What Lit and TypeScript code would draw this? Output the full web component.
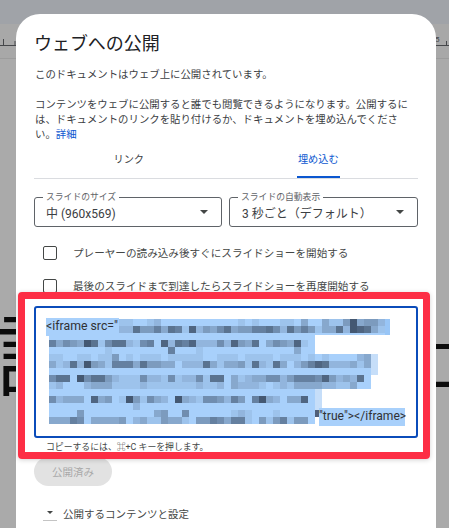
import { LitElement, html, css, svg } from "lit";
import { customElement } from "lit/decorators.js";

const z = (n: number) => "0".repeat(n);
const ROWS: { h: number; s: string }[] = [
  { h: 7, s: z(10) + "110012" + z(9) + "00" + "101000110" + "300311493442" + "e" },
  { h: 7, s: z(10) + "227446376182435" + "73446675274641337298731" + "e" },
  { h: 2, s: z(48) + "e" },
  { h: 5, s: z(38) },
  { h: 7, s: "6354397157721560827682225" + "2843703543810" },
  { h: 7, s: z(8) + "1" + z(8) + "6" + "000" + "1" + z(13) + "3" + "00" },
  { h: 7, s: "1100110114010111011111001110111101110101000023" + "l" },
  { h: 7, s: "31272943166637443302227313" + "34172173024687222313" + "l" },
  { h: 7, s: z(46) + "l" },
  { h: 7, s: "5770957742111522151225177" + "031233552466658423270" },
  { h: 7, s: "12000233311112111111121120" + "322210121333322113" + "00" },
  { h: 7, s: z(38) + "l" },
  { h: 7, s: "52333083401941532093215542" + "64069320338" + "0" + "l" },
  { h: 7, s: z(12) + "2" + z(25) + "l" },
  { h: 7, s: "0000400000000003400500000" + "0121000100" + z(3) + "k" },
  { h: 7, s: "3336503333402311433104465366104146144" + "0" },
];

const BASE = [168, 208, 251];
const DARK = [68, 88, 114];
function shade(ch: string): string {
  if (ch === "l") return "#c6def9";
  if (ch === "e") return "#98c5f6";
  if (ch === "k") return "#4f5f78";
  const t = Number(ch) / 9;
  const c = BASE.map((b, i) => Math.round(b + (DARK[i] - b) * t));
  return `rgb(${c[0]},${c[1]},${c[2]})`;
}

@customElement("app-root")
export class AppRoot extends LitElement {
  static styles = css`
    :host {
      display: block;
      font-family: Roboto, "Noto Sans CJK JP", sans-serif;
      color: #3c4043;
    }
    .stage {
      position: relative;
      width: 449px;
      height: 528px;
      overflow: hidden;
      background: #aaaaaa;
    }
    .band-top { height: 24px; background: #a0a3a8; }
    .band-ruler {
      height: 35px;
      background: #a8a8a8;
      border-bottom: 1px solid #9c9c9c;
      box-sizing: border-box;
    }
    .band-ruler svg { display: block; }
    .glyph {
      position: absolute;
      font-family: "Noto Sans CJK JP", sans-serif;
      color: #0c0c0c;
      line-height: 1;
    }
    .g-left { left: -4px; top: 306px; font-size: 88px; }
    .g-right { left: 410px; top: 330px; font-size: 62px; }
    .modal {
      position: absolute;
      left: 16px;
      top: 14px;
      width: 420px;
      height: 560px;
      box-sizing: border-box;
      background: #fff;
      border-radius: 24px;
      padding: 18px 18px 0;
    }
    h1 {
      margin: 0;
      font-size: 18px;
      line-height: 24px;
      font-weight: 400;
      color: #202124;
      letter-spacing: -0.05px;
    }
    .para {
      margin: 11px 0 0 1px;
      font-size: 10.4px;
      line-height: 15px;
      white-space: nowrap;
    }
    a { color: #0b57d0; text-decoration: none; }
    .tabs {
      display: grid;
      grid-template-columns: 1fr 1fr;
      height: 31px;
      border-bottom: 1px solid #dadce0;
      margin-top: 5px;
      padding-right: 5px;
    }
    .tab {
      display: flex;
      justify-content: center;
      align-items: flex-start;
      padding-top: 5px;
      font-size: 10.2px;
      line-height: 15px;
    }
    .tab span { display: block; height: 26px; box-sizing: border-box; }
    .tab.on { color: #0b57d0; }
    .tab.on span { border-bottom: 2px solid #0b57d0; padding: 0 1px; }
    .selects {
      display: grid;
      grid-template-columns: 188px 189px;
      gap: 7px;
      margin-top: 18px;
    }
    .select {
      position: relative;
      height: 30px;
      box-sizing: border-box;
      border: 1px solid #5f6368;
      border-radius: 3px;
      display: flex;
      align-items: center;
      justify-content: space-between;
      padding: 0 13px 0 11px;
      font-size: 12px;
      color: #3c4043;
    }
    .select.two { padding-left: 12px; }
    .select label {
      position: absolute;
      left: 8px;
      top: -6px;
      padding: 0 3px;
      background: #fff;
      font-size: 8.8px;
      line-height: 11px;
      color: #5f6368;
    }
    .select svg { display: block; }
    .check {
      display: flex;
      align-items: center;
      height: 33px;
      padding-left: 9px;
      font-size: 10.6px;
      color: #444746;
    }
    .checks { margin-top: 9px; }
    .box {
      width: 14px;
      height: 14px;
      box-sizing: border-box;
      border: 1.3px solid #444746;
      border-radius: 2px;
      margin-right: 16px;
    }
    .area {
      height: 132px;
      box-sizing: border-box;
      border: 2px solid #0b4cba;
      border-radius: 3px;
      padding: 11px 0 0 13px;
      margin-top: 4px;
      position: relative;
    }
    .sel {
      position: relative;
      width: 360px;
    }
    .r {
      display: flex;
      background: #a8d0fb;
      width: max-content;
    }
    .c { display: block; flex: 0 0 7px; }
    .c.e { flex-basis: 5px; }
    .c.k { flex-basis: 4px; }
    .t {
      position: absolute;
      background: #a8d0fb;
      color: #303134;
      font-size: 12.3px;
      height: 17.5px;
      line-height: 17.5px;
      white-space: nowrap;
    }
    .t1 { left: -3px; top: -1px; width: 73px; }
    .t2 { left: 270px; top: 89px; width: 86px; font-size: 12.1px; }
    .hint {
      margin: 3px 0 0 12px;
      font-size: 8.85px;
      line-height: 12px;
      color: #444746;
    }
    .btn {
      margin-top: 4px;
      width: 78px;
      height: 29px;
      border-radius: 15px;
      background: #e2e2e2;
      color: #a9a9a9;
      font-size: 10.5px;
      display: flex;
      align-items: center;
      justify-content: center;
    }
    .disc {
      display: flex;
      align-items: center;
      margin-top: 18px;
      height: 18px;
      font-size: 10.5px;
      color: #444746;
    }
    .tri {
      width: 14px;
      height: 15px;
      margin: 0 6px 0 9px;
      border-bottom: 1px solid #c4c4c4;
      display: flex;
      align-items: center;
      justify-content: center;
      box-sizing: border-box;
    }
    .mark {
      position: absolute;
      left: 18px;
      top: 292px;
      width: 412px;
      height: 167px;
      box-sizing: border-box;
      border: 7px solid #fd2e45;
      border-radius: 4px;
      box-shadow: 0 1px 5px rgba(0, 0, 0, 0.18);
    }
  `;

  private arrow() {
    return html`<svg width="8" height="4" viewBox="0 0 8 4"><polygon points="0,0 8,0 4,4" fill="#444746"></polygon></svg>`;
  }

  private ruler() {
    return svg`
      <line x1="0" x2="16" y1="21.5" y2="21.5" stroke="#45474a" stroke-width="1"></line>
      <line x1="3.5" x2="3.5" y1="15" y2="21" stroke="#45474a" stroke-width="1"></line>
      <line x1="15" x2="15" y1="17" y2="21" stroke="#45474a" stroke-width="1"></line>
      <line x1="436" x2="449" y1="21.5" y2="21.5" stroke="#45474a" stroke-width="1"></line>
      <line x1="446.5" x2="446.5" y1="17" y2="21" stroke="#45474a" stroke-width="1"></line>
      <text x="435" y="18" font-size="8" fill="#45474a" font-family="Roboto">5</text>`;
  }

  render() {
    return html`
      <div class="stage">
        <div class="band-top"></div>
        <div class="band-ruler">
          <svg width="449" height="34">${this.ruler()}</svg>
        </div>
        <div class="glyph g-left">話</div>
        <div class="glyph g-right">二</div>
        <div class="modal">
          <h1>ウェブへの公開</h1>
          <p class="para">
            このドキュメントはウェブ上に公開されています。<br /><br />コンテンツをウェブに公開すると誰でも閲覧できるようになります。公開するに<br />は、ドキュメントのリンクを貼り付けるか、ドキュメントを埋め込んでくださ<br />い。<a href="#">詳細</a>
          </p>
          <div class="tabs">
            <div class="tab"><span>リンク</span></div>
            <div class="tab on"><span>埋め込む</span></div>
          </div>
          <div class="selects">
            <div class="select">
              <label>スライドのサイズ</label><span>中 (960x569)</span>${this.arrow()}
            </div>
            <div class="select two">
              <label>スライドの自動表示</label><span>3 秒ごと（デフォルト）</span>${this.arrow()}
            </div>
          </div>
          <div class="checks">
            <div class="check"><div class="box"></div>プレーヤーの読み込み後すぐにスライドショーを開始する</div>
            <div class="check"><div class="box"></div>最後のスライドまで到達したらスライドショーを再度開始する</div>
          </div>
          <div class="area">
            <div class="sel">
              ${ROWS.map(
                (row) => html`<div class="r" style="height:${row.h}px">
                  ${[...row.s].map(
                    (ch) =>
                      html`<i class="c ${ch === "e" || ch === "k" ? ch : ""}" style="background:${shade(ch)}"></i>`
                  )}
                </div>`
              )}
              <span class="t t1">&lt;iframe src="</span>
              <span class="t t2">"true"&gt;&lt;/iframe&gt;</span>
            </div>
          </div>
          <div class="hint">コピーするには、⌘+C キーを押します。</div>
          <div class="btn">公開済み</div>
          <div class="disc">
            <div class="tri"><svg width="6" height="3" viewBox="0 0 6 3"><polygon points="0,0 6,0 3,3" fill="#444746"></polygon></svg></div>
            公開するコンテンツと設定
          </div>
        </div>
        <div class="mark"></div>
      </div>
    `;
  }
}
